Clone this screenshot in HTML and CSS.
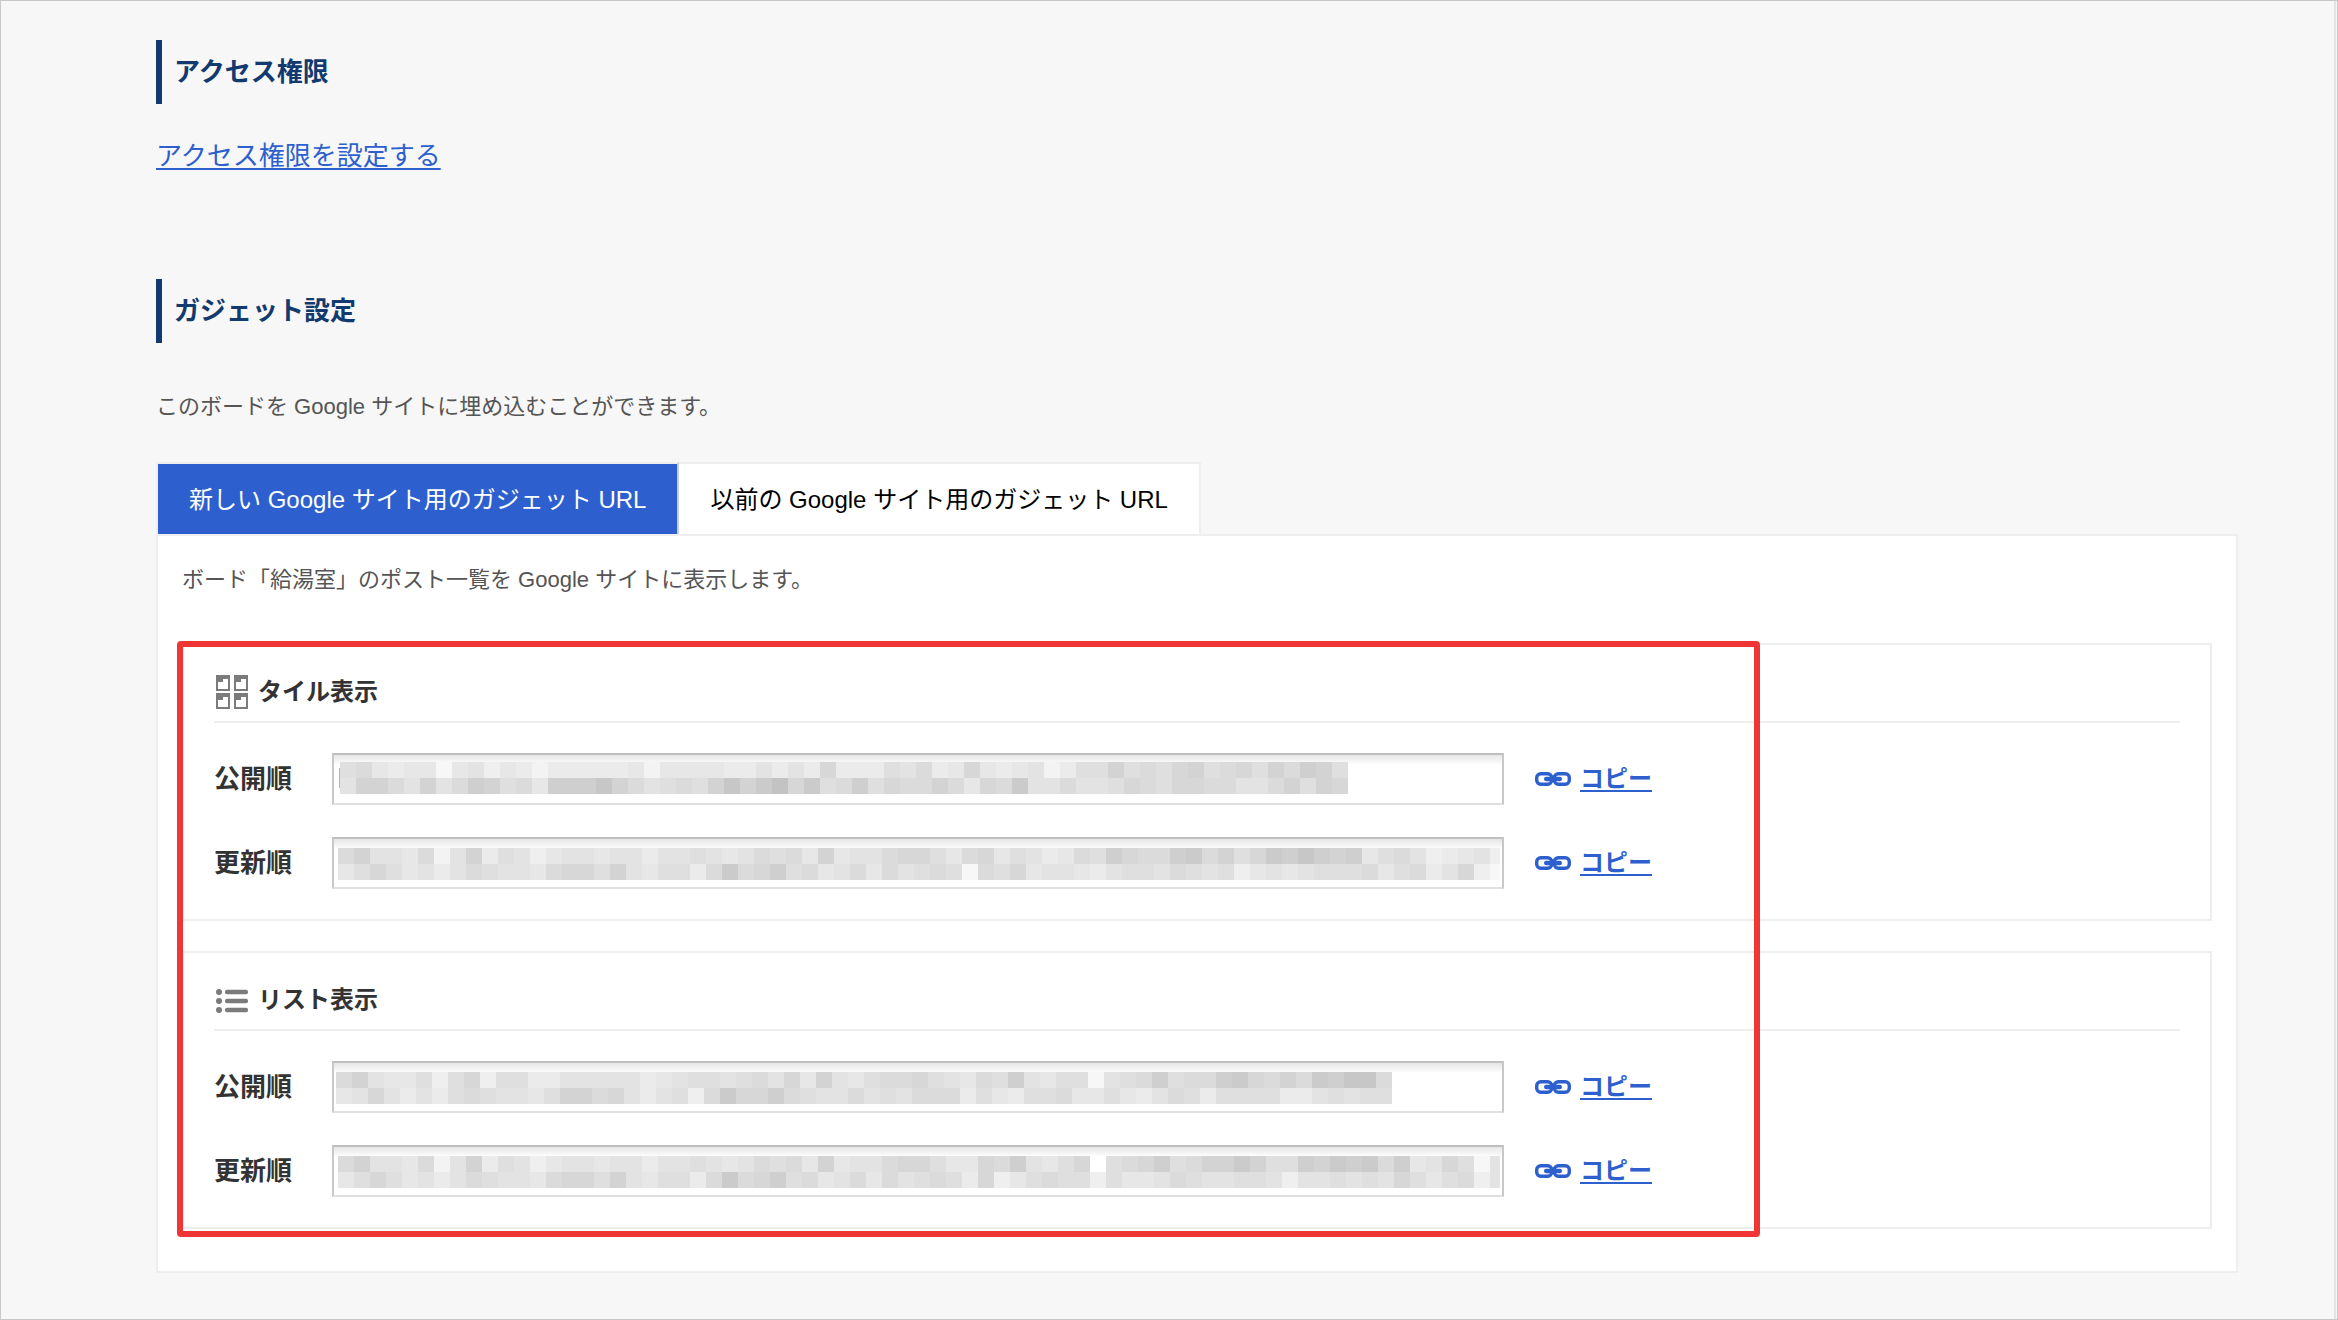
FILE: index.html
```html
<!DOCTYPE html>
<html lang="ja">
<head>
    <meta charset="UTF-8">
    <meta name="viewport" content="width=device-width, initial-scale=1.0">
    <title>ガジェット設定</title>
    <link rel="stylesheet" href="styles.css">
</head>
<body>
    <main class="page">
        <section class="section">
            <h2 class="heading">アクセス権限</h2>
            <a class="access-link" href="#">アクセス権限を設定する</a>
        </section>

        <section class="section">
            <h2 class="heading">ガジェット設定</h2>
            <p class="note">このボードを Google サイトに埋め込むことができます。</p>

            <div class="tabs">
                <button type="button" class="tab active">新しい Google サイト用のガジェット URL</button>
                <button type="button" class="tab">以前の Google サイト用のガジェット URL</button>
            </div>

            <div class="panel">
                <p class="note">ボード「給湯室」のポスト一覧を Google サイトに表示します。</p>

                <div class="cards">
                    <div class="card">
                        <h3 class="card-title">
                            <svg class="title-icon" viewBox="0 0 32 34" aria-hidden="true">
                                <g fill="#7b7b7b" fill-rule="evenodd">
                                    <path d="M0 0h14v16H0zM2 7v7h10V4H7v3z"/>
                                    <path d="M18 0h14v16H18zM20 7v7h10V4h-5v3z"/>
                                    <path d="M0 18h14v16H0zM2 25v7h10V22H7v3z"/>
                                    <path d="M18 18h14v16H18zM20 25v7h10V22h-5v3z"/>
                                </g>
                            </svg>
                            タイル表示
                        </h3>
                        <div class="row">
                            <label class="label" for="tile-published">公開順</label>
                            <div class="field">
                                <input type="text" id="tile-published" readonly>
                                <svg class="mosaic" data-x="6" data-y="7"
                                    data-top="896566267465355555636666557575a55587956a65673588b898ab89a8b9cb8"
                                    data-bottom="7bb97b79cb896ccceb97898bebdfad89c8a99b96a9d779778a98aa99779b8ba">
                                    <rect x="5" y="13" width="1" height="20" fill="#b4b4b4"/>
                                </svg>
                            </div>
                            <a class="copy" href="#"><svg class="link-icon" viewBox="0 0 36 14" aria-hidden="true"><use href="#link"/></svg><span>コピー</span></a>
                        </div>
                        <div class="row">
                            <label class="label" for="tile-updated">更新順</label>
                            <div class="field">
                                <input type="text" id="tile-updated" readonly>
                                <svg class="mosaic" data-x="4" data-y="9"
                                    data-top="9b776937b587467767757787679896b6779aa869a6875698ca99cd9b8adcecbc689745674"
                                    data-bottom="68a86757987769aa8b768859d9ac89679697898298a677657887987846767888968957a42"></svg>
                            </div>
                            <a class="copy" href="#"><svg class="link-icon" viewBox="0 0 36 14" aria-hidden="true"><use href="#link"/></svg><span>コピー</span></a>
                        </div>
                    </div>

                    <div class="card">
                        <h3 class="card-title">
                            <svg class="title-icon" viewBox="0 0 32 34" aria-hidden="true">
                                <g fill="#7b7b7b">
                                    <circle cx="3" cy="9" r="3"/>
                                    <circle cx="3" cy="18" r="3"/>
                                    <circle cx="3" cy="27" r="3"/>
                                    <rect x="9" y="6.7" width="23" height="4.6" rx="2"/>
                                    <rect x="9" y="15.7" width="23" height="4.6" rx="2"/>
                                    <rect x="9" y="24.7" width="23" height="4.6" rx="2"/>
                                </g>
                            </svg>
                            リスト表示
                        </h3>
                        <div class="row">
                            <label class="label" for="list-published">公開順</label>
                            <div class="field">
                                <input type="text" id="list-published" readonly>
                                <svg class="mosaic" data-x="2" data-y="9"
                                    data-top="9b766848a4885577777567887897a6b76899a87698c76882789c899cda9b9dcee9"
                                    data-bottom="67a75758987768bb9a757849daac98779787999586588966865798588885578788"></svg>
                            </div>
                            <a class="copy" href="#"><svg class="link-icon" viewBox="0 0 36 14" aria-hidden="true"><use href="#link"/></svg><span>コピー</span></a>
                        </div>
                        <div class="row">
                            <label class="label" for="list-updated">更新順</label>
                            <div class="field">
                                <input type="text" id="list-updated" readonly>
                                <svg class="mosaic" data-x="4" data-y="9"
                                    data-top="9b776937b587467767757787679896b6779aa866a9c768a089ac89bbdb88cbdcd9c67a827"
                                    data-bottom="68a86757987769aa8b768859d9ac896796978985a4689884866798778874778787a868947"></svg>
                            </div>
                            <a class="copy" href="#"><svg class="link-icon" viewBox="0 0 36 14" aria-hidden="true"><use href="#link"/></svg><span>コピー</span></a>
                        </div>
                    </div>

                    <div class="highlight"></div>
                </div>
            </div>
        </section>
    </main>

    <!-- shared link icon -->
    <svg class="defs" aria-hidden="true">
        <symbol id="link" viewBox="0 0 36 14">
            <g fill="none" stroke="#2d5fcf" stroke-width="3.4">
                <rect x="1.7" y="1.7" width="15" height="10.6" rx="4"/>
                <rect x="19.3" y="1.7" width="15" height="10.6" rx="4"/>
            </g>
            <rect x="9" y="4.8" width="18" height="4.4" rx="2.2" fill="#2d5fcf"/>
        </symbol>
    </svg>

    <script>
        // each hex digit is one 16px block, 0 = white, f = darkest
        function drawLine(svg, levels, x, y) {
            levels.split("").forEach((level, i) => {
                const rect = document.createElementNS("http://www.w3.org/2000/svg", "rect");
                const gray = 255 - parseInt(level, 16) * 4;
                // the 73rd block is cut off by the edge of the field
                rect.setAttribute("x", x + i * 16);
                rect.setAttribute("y", y);
                rect.setAttribute("width", i === 72 ? 10 : 16);
                rect.setAttribute("height", 16);
                rect.setAttribute("fill", `rgb(${gray}, ${gray}, ${gray})`);
                svg.appendChild(rect);
            });
        }

        document.querySelectorAll(".mosaic").forEach(svg => {
            const x = Number(svg.dataset.x);
            const y = Number(svg.dataset.y);
            drawLine(svg, svg.dataset.top, x, y);
            drawLine(svg, svg.dataset.bottom, x, y + 16);
        });
    </script>
</body>
</html>
```
FILE: styles.css
```css
* {
    box-sizing: border-box;
}
body {
    margin: 0;
    min-height: 100vh;
    padding-right: 1px;
    border: 1px solid #c8c8c8;
    background: #f7f7f7;
    color: #333;
    font-family: "Liberation Sans", "Noto Sans CJK JP", sans-serif;
    font-size: 24px;
    display: flex;
}
.page {
    flex: 1;
    padding: 39px 96px 44px 155px;
    border-right: 2px solid #e4e4e4;
}
.section {
    margin-bottom: 88px;
}
.section:last-child {
    margin-bottom: 0;
}
.heading {
    margin: 0 0 32px;
    padding-left: 12px;
    border-left: 6px solid #123a6e;
    color: #123a6e;
    font-size: 26px;
    line-height: 64px;
}
.access-link {
    display: block;
    width: fit-content;
    color: #2d5fcf;
    font-size: 26px;
    line-height: 40px;
    height: 55px;
    text-decoration-thickness: 2px;
    text-underline-offset: 3px;
}
.note {
    margin: 0;
    color: #555;
    font-size: 22px;
    line-height: 32px;
}
.heading + .note {
    margin: 48px 0 39px;
}

/* tabs */
.tabs {
    display: flex;
}
.tab {
    height: 72px;
    padding: 0 31px 4px;
    border: 2px solid #eee;
    border-width: 2px 2px 0 0;
    background: white;
    color: black;
    font-family: inherit;
    font-size: 24px;
    cursor: pointer;
}
.tab.active {
    border-left-width: 2px;
    border-right-color: #ccc;
    background: #2d5fcf;
    background-clip: padding-box;
    color: white;
}

/* panel */
.panel {
    padding: 28px 24px 42px;
    border: 2px solid #eee;
    background: white;
}
.cards {
    position: relative;
    display: flex;
    flex-direction: column;
    gap: 30px;
    margin-top: 47px;
}
.card {
    padding: 0 30px 30px;
    border: 2px solid #eee;
}
.card-title {
    display: flex;
    align-items: center;
    gap: 10px;
    margin: 0;
    padding: 30px 2px 12px;
    border-bottom: 2px solid #eee;
    font-size: 24px;
    line-height: 34px;
}
.title-icon {
    width: 32px;
    height: 34px;
}
.row {
    display: flex;
    align-items: center;
    margin-top: 30px;
}
.row + .row {
    margin-top: 32px;
}
.label {
    width: 118px;
    font-size: 26px;
    font-weight: bold;
    line-height: 40px;
}
.field {
    position: relative;
    width: 60%;
    max-width: 1172px;
    height: 52px;
}
.field input {
    display: block;
    width: 100%;
    height: 100%;
    padding: 0 8px;
    border: 2px solid #c8c8c8;
    border-top-color: #bfbfbf;
    border-bottom-color: #e0e0e0;
    background: white linear-gradient(#e6e6e6, white 10px);
    font-size: 22px;
}
.mosaic {
    position: absolute;
    top: 2px;
    left: 2px;
    width: calc(100% - 4px);
    height: 48px;
    pointer-events: none;
}
.copy {
    display: flex;
    align-items: center;
    gap: 9px;
    margin-left: 31px;
    color: #2d5fcf;
    font-weight: bold;
    line-height: 40px;
    text-decoration: none;
}
.copy span {
    text-decoration: underline;
    text-decoration-thickness: 2px;
    text-underline-offset: 3px;
}
.link-icon {
    width: 36px;
    height: 14px;
}
.defs {
    display: none;
}

/* red frame over the two cards */
.highlight {
    position: absolute;
    top: -2px;
    bottom: -8px;
    left: -5px;
    width: 78%;
    border: 6px solid #f03535;
    border-radius: 4px;
    pointer-events: none;
}
```
